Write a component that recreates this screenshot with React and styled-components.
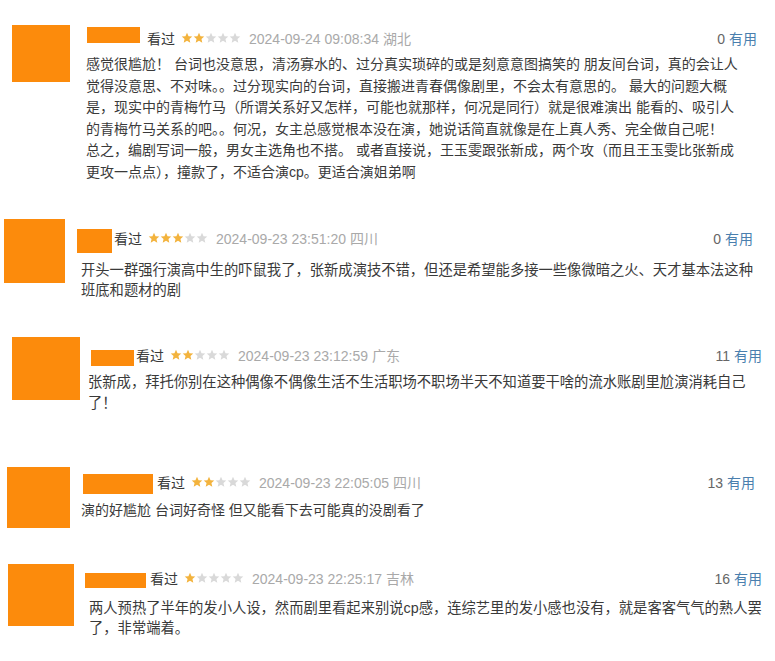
import styled, { createGlobalStyle } from "styled-components";

const GlobalStyle = createGlobalStyle`
  body {
    margin: 0;
    background: #fff;
    font-family: "Liberation Sans", "Noto Sans CJK SC", sans-serif;
  }
`;

const comments = [
  {
    h: 212, pt: 25, left: 12, av: [58, 57], avGap: 17, name: [53, 16], nameY: -3,
    gap: 7, bodyTop: 3, width: 670, textShift: -1, textGap: 6, lh: 21.5, fs: 14,
    stars: 2, date: "2024-09-24 09:08:34", loc: "湖北", votes: 0,
    lines: [
      "感觉很尴尬！ 台词也没意思，清汤寡水的、过分真实琐碎的或是刻意意图搞笑的 朋友间台词，真的会让人",
      "觉得没意思、不对味。。过分现实向的台词，直接搬进青春偶像剧里，不会太有意思的。 最大的问题大概",
      "是，现实中的青梅竹马（所谓关系好又怎样，可能也就那样，何况是同行）就是很难演出 能看的、吸引人",
      "的青梅竹马关系的吧。。何况，女主总感觉根本没在演，她说话简直就像是在上真人秀、完全做自己呢！",
      "总之，编剧写词一般，男女主选角也不搭。 或者直接说，王玉雯跟张新成，两个攻（而且王玉雯比张新成",
      "更攻一点点），撞款了，不适合演cp。更适合演姐弟啊",
    ],
  },
  {
    h: 118, pt: 7, left: 4, av: [61, 64], avGap: 12, name: [35, 24], nameY: 3,
    gap: 2, bodyTop: 9, width: 676, textShift: 4, textGap: 12, lh: 20, fs: 14.3,
    stars: 3, date: "2024-09-23 23:51:20", loc: "四川", votes: 0,
    lines: [
      "开头一群强行演高中生的吓鼠我了，张新成演技不错，但还是希望能多接一些像微暗之火、天才基本法这种",
      "班底和题材的剧",
    ],
  },
  {
    h: 130, pt: 7, left: 12, av: [68, 63], avGap: 11, name: [43, 16], nameY: 3,
    gap: 2, bodyTop: 8, width: 671, textShift: -3, textGap: 6.5, lh: 21, fs: 14.3,
    stars: 2, date: "2024-09-23 23:12:59", loc: "广东", votes: 11,
    lines: [
      "张新成，拜托你别在这种偶像不偶像生活不生活职场不职场半天不知道要干啥的流水账剧里尬演消耗自己",
      "了！",
    ],
  },
  {
    h: 96, pt: 7, left: 7, av: [63, 61], avGap: 13, name: [70, 20], nameY: 2,
    gap: 4, bodyTop: 5, width: 672, textShift: -2, textGap: 7.5, lh: 21, fs: 14,
    stars: 2, date: "2024-09-23 22:05:05", loc: "四川", votes: 13,
    lines: ["演的好尴尬 台词好奇怪 但又能看下去可能真的没剧看了"],
  },
  {
    h: 105, pt: 8, left: 8, av: [66, 62], avGap: 11, name: [61, 15], nameY: 2,
    gap: 4, bodyTop: 4, width: 677, textShift: 4, textGap: 10, lh: 20, fs: 14.3,
    stars: 1, date: "2024-09-23 22:25:17", loc: "吉林", votes: 16,
    lines: [
      "两人预热了半年的发小人设，然而剧里看起来别说cp感，连综艺里的发小感也没有，就是客客气气的熟人罢",
      "了，非常端着。",
    ],
  },
];

const List = styled.div`
  width: 775px;
  display: flex;
  flex-direction: column;
`;

const Item = styled.div`
  height: ${(p) => p.$h}px;
  box-sizing: border-box;
  padding: ${(p) => p.$pt}px 0 0 ${(p) => p.$left}px;
  display: flex;
  align-items: flex-start;
`;

const Avatar = styled.div`
  flex: none;
  width: ${(p) => p.$w}px;
  height: ${(p) => p.$h}px;
  background: #fc8b0c;
  margin-right: ${(p) => p.$gap}px;
`;

const Body = styled.div`
  flex: none;
  width: ${(p) => p.$width}px;
  margin-top: ${(p) => p.$top}px;
  display: flex;
  flex-direction: column;
`;

const Meta = styled.div`
  height: 20px;
  display: flex;
  align-items: center;
  font-size: 14px;
  white-space: nowrap;
`;

const NameCover = styled.div`
  flex: none;
  width: ${(p) => p.$w}px;
  height: ${(p) => p.$h}px;
  background: #fc8b0c;
  transform: translateY(${(p) => p.$y}px);
`;

const Watched = styled.span`
  color: #3a3a3a;
  margin-left: ${(p) => p.$gap}px;
`;

const Stars = styled.span`
  display: flex;
  margin-left: 6px;
`;

const DateText = styled.span`
  color: #a9a9a9;
  margin-left: 8px;
`;

const Votes = styled.span`
  margin-left: auto;
  color: #666;

  a {
    color: #4a7fae;
    text-decoration: none;
  }
`;

const Text = styled.div`
  margin: ${(p) => p.$gap}px 0 0 ${(p) => p.$shift}px;
  font-size: ${(p) => p.$fs}px;
  line-height: ${(p) => p.$lh}px;
  color: #3a3a3a;

  div {
    white-space: nowrap;
  }
`;

const Star = ({ on }) => (
  <svg width="12" height="12" viewBox="0 0 24 24">
    <path
      d="M12 1.5l3.1 7 7.4.7-5.6 5 1.7 7.4L12 17.7l-6.6 3.9 1.7-7.4-5.6-5 7.4-.7z"
      fill={on ? "#f3b33d" : "#d9d9d9"}
    />
  </svg>
);

const Comment = ({ c }) => (
  <Item $h={c.h} $pt={c.pt} $left={c.left}>
    <Avatar $w={c.av[0]} $h={c.av[1]} $gap={c.avGap} />
    <Body $width={c.width} $top={c.bodyTop}>
      <Meta>
        <NameCover $w={c.name[0]} $h={c.name[1]} $y={c.nameY} />
        <Watched $gap={c.gap}>看过</Watched>
        <Stars>
          {[1, 2, 3, 4, 5].map((n) => (
            <Star key={n} on={n <= c.stars} />
          ))}
        </Stars>
        <DateText>
          {c.date} {c.loc}
        </DateText>
        <Votes>
          {c.votes} <a href="#">有用</a>
        </Votes>
      </Meta>
      <Text $gap={c.textGap} $shift={c.textShift} $fs={c.fs} $lh={c.lh}>
        {c.lines.map((line, i) => (
          <div key={i}>{line}</div>
        ))}
      </Text>
    </Body>
  </Item>
);

const App = () => {
  return (
    <>
      <GlobalStyle />
      <List>
        {comments.map((c, i) => (
          <Comment key={i} c={c} />
        ))}
      </List>
    </>
  );
};

export default App;
